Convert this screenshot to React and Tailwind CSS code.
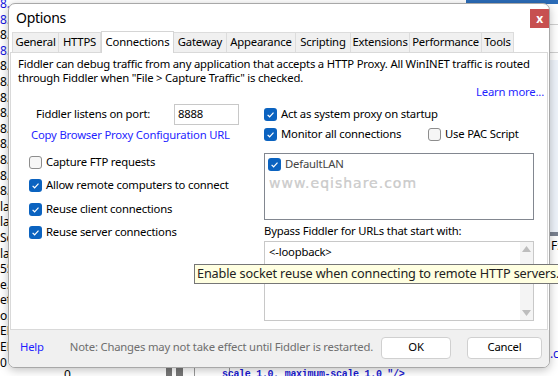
import React from "react";

const F = { fontFamily: '"Noto Sans", "Open Sans", sans-serif' };

function Box({ checked }) {
  if (checked)
    return (
      <span className="flex h-[13px] w-[13px] shrink-0 items-center justify-center rounded-[3px] bg-[#0b63c0]">
        <svg width="13" height="13" viewBox="0 0 13 13">
          <path d="M3.6 6.9L5.6 8.8L9.5 4.7" fill="none" stroke="white" strokeWidth="1.2" />
        </svg>
      </span>
    );
  return <span className="h-[13px] w-[13px] shrink-0 rounded-[3px] border border-[#8d8d8d] bg-[#f6f6f6]" />;
}

const tabs = [
  ["General", 47],
  ["HTTPS", 43],
  ["Connections", 73],
  ["Gateway", 54],
  ["Appearance", 70],
  ["Scripting", 56],
  ["Extensions", 60],
  ["Performance", 73],
  ["Tools", 33],
];

const leftLines = [
  ["8.", "b"], ["8.", "b"], ["8.", "k"], ["8.", "b"], ["8.", "k"], ["8.", "k"], ["8.", "k"], ["8.", "k"],
  ["8.", "k"], ["8.", "k"], ["8.", "k"], ["8.", "k"], ["8.", "k"], ["la", "k"], ["la", "k"], ["Sd", "k"],
  ["la", "k"], ["55", "k"], ["e..", "k"], ["et", "k"], ["o.", "k"], ["EE", "k"], ["EE", "k"], ["0", "k"],
];

export default function App() {
  return (
    <div
      className="relative h-[376px] w-[558px] overflow-hidden bg-white text-[11.3px] tracking-[-0.2px] text-black"
      style={F}
    >
      {/* background editor */}
      <div className="flex flex-col text-[12px] leading-[15.6px] tracking-normal" style={{ marginTop: -4 }}>
        {leftLines.map(([t, c], i) => (
          <div key={i} className={c === "b" ? "text-[#1515e0]" : "text-black"}>{t}</div>
        ))}
      </div>
      <div className="absolute left-[466px] top-0 h-[4px] w-[92px] bg-[#2b6cb8]" />
      <div className="absolute left-[550px] top-[24px] h-px w-[8px] bg-[#d0d0d0]" />
      <div className="absolute left-[550px] top-[52px] h-px w-[8px] bg-[#d0d0d0]" />
      <div className="absolute left-[550px] top-[60px] h-[172px] w-[8px] bg-[#eef3fa]" />
      <div className="absolute left-[550px] top-[232px] h-[4px] w-[8px] bg-[#7a8290]" />
      <div className="absolute left-[551px] top-[240px] text-[12px] leading-none">F:</div>
      <div className="absolute left-[550px] top-[345px] text-[12px] text-[#1515e0]">.c</div>
      <div className="absolute left-[64px] top-[366px] text-[12px]">0</div>
      <div className="absolute left-[166px] top-[366px] h-[12px] w-[6px] bg-[#777]" />
      <div className="absolute left-[176px] top-[366px] h-[12px] w-[7px] bg-[#777]" />
      <div className="absolute left-[194px] top-[366px] h-[12px] w-[36px] border border-[#999] bg-white" />
      <div
        className="absolute left-[222px] top-[367px] text-[10px] font-bold tracking-[-0.3px] text-[#1a1ad0]"
        style={{ fontFamily: '"Liberation Mono", monospace' }}
      >
        scale 1.0, maximum-scale 1.0 "/&gt;
      </div>

      {/* dialog */}
      <div className="absolute left-[8px] top-[3px] flex h-[365px] w-[542px] flex-col overflow-hidden rounded-[7px] border border-[#a8a8a8] bg-white shadow-[0_2px_10px_rgba(0,0,0,0.25)]">
        <div className="flex h-[27px] shrink-0 items-center justify-between">
          <span className="pl-[7px] text-[14px] leading-none tracking-[-0.3px]">Options</span>
          <div className="mt-[2px] flex h-[19px] w-[19px] items-center justify-center bg-[#c75050] text-[12px] font-bold leading-none text-white">
            x
          </div>
        </div>
        <div className="flex h-[21px] shrink-0 items-end pl-[3px]">
          {tabs.map(([t, w]) =>
            t === "Connections" ? (
              <div
                key={t}
                style={{ width: w }}
                className="relative z-10 -mb-px flex h-[22px] items-center justify-center border border-b-0 border-[#d5d5d5] bg-white"
              >
                {t}
              </div>
            ) : (
              <div
                key={t}
                style={{ width: w }}
                className="-ml-px flex h-[20px] items-center justify-center border border-b-0 border-[#dcdcdc] bg-[#f0f0f0] first:ml-0"
              >
                {t}
              </div>
            )
          )}
        </div>
        <div className="mx-[1px] flex h-[278px] shrink-0 flex-col border border-[#d9d9d9] bg-white pl-[7px] pr-[3px] pt-[4px]">
          <p className="leading-[13.5px]">
            Fiddler can debug traffic from any application that accepts a HTTP Proxy. All WinINET traffic is routed
            through Fiddler when "File &gt; Capture Traffic" is checked.
          </p>
          <div className="flex h-[16px] items-center justify-end text-[#1f1fff]">Learn more...</div>
          <div className="mt-[4px] flex">
            <div className="flex w-[246px] shrink-0 flex-col">
              <div className="flex h-[21px] items-center">
                <span className="ml-[18px]">Fiddler listens on port:</span>
                <div className="ml-auto mr-[25px] flex h-[21px] w-[65px] items-center border border-[#c8c8c8] pl-[3px]">
                  8888
                </div>
              </div>
              <div className="ml-[13px] flex h-[21px] items-center text-[#1f1fff]">Copy Browser Proxy Configuration URL</div>
              <div className="mt-[5px] flex flex-col">
                {[
                  ["Capture FTP requests", false],
                  ["Allow remote computers to connect", true],
                  ["Reuse client connections", true],
                  ["Reuse server connections", true],
                ].map(([t, c]) => (
                  <div key={t} className="ml-[11px] flex h-[23.3px] items-center gap-[4px]">
                    <Box checked={c} />
                    <span>{t}</span>
                  </div>
                ))}
              </div>
            </div>
            <div className="flex w-[270px] flex-col">
              <div className="flex h-[20px] items-center gap-[4px]">
                <Box checked />
                <span>Act as system proxy on startup</span>
              </div>
              <div className="flex h-[20px] items-center">
                <div className="flex w-[164px] items-center gap-[4px]">
                  <Box checked />
                  <span>Monitor all connections</span>
                </div>
                <div className="flex items-center gap-[4px]">
                  <Box />
                  <span>Use PAC Script</span>
                </div>
              </div>
              <div className="mt-[9px] flex h-[67px] flex-col border border-[#828790] pl-[3px] pt-[2px]">
                <div className="flex items-center gap-[4px] text-[#444]">
                  <Box checked />
                  <span>DefaultLAN</span>
                </div>
                <div
                  className="ml-[1px] mt-[3px] text-[14px] leading-none tracking-[1px] text-[#cfcfcf]"
                  style={{ fontFamily: '"DejaVu Sans", sans-serif', WebkitTextStroke: "0.2px #b5b5b5" }}
                >
                  www.eqishare.com
                </div>
              </div>
              <div className="mt-[1px] flex h-[20px] items-center">Bypass Fiddler for URLs that start with:</div>
              <div className="flex h-[80px] border border-[#c8c8c8]">
                <div className="flex-1 pl-[4px] pt-[2px]">&lt;-loopback&gt;</div>
                <div className="flex w-[13px] flex-col items-center justify-between bg-[#f4f4f4] py-[4px]">
                  <svg width="9" height="6" viewBox="0 0 9 6"><path d="M0 6L4.5 0L9 6Z" fill="#bdbdbd" /></svg>
                  <svg width="9" height="6" viewBox="0 0 9 6"><path d="M0 0L4.5 6L9 0Z" fill="#bdbdbd" /></svg>
                </div>
              </div>
            </div>
          </div>
        </div>
        <div className="flex flex-1 items-center bg-[#f0f0f0] pl-[11px] pb-[2px]">
          <span className="text-[#1f1fff]">Help</span>
          <span className="ml-[26px] whitespace-nowrap text-[#6e6e6e]">
            Note: Changes may not take effect until Fiddler is restarted.
          </span>
          <div className="ml-auto mr-[7px] flex gap-[16px]">
            <div className="flex h-[22px] w-[70px] items-center justify-center rounded-[4px] border border-[#d0d0d0] bg-white">OK</div>
            <div className="flex h-[22px] w-[75px] items-center justify-center rounded-[4px] border border-[#d0d0d0] bg-white">Cancel</div>
          </div>
        </div>
      </div>

      {/* tooltip */}
      <div className="absolute left-[194px] top-[264px] flex h-[20px] w-[380px] items-center whitespace-nowrap border border-[#767676] bg-[#ffffe1] pl-[2px] text-[12.7px] tracking-[-0.15px] text-[#222]">
        Enable socket reuse when connecting to remote HTTP servers.
      </div>
    </div>
  );
}
